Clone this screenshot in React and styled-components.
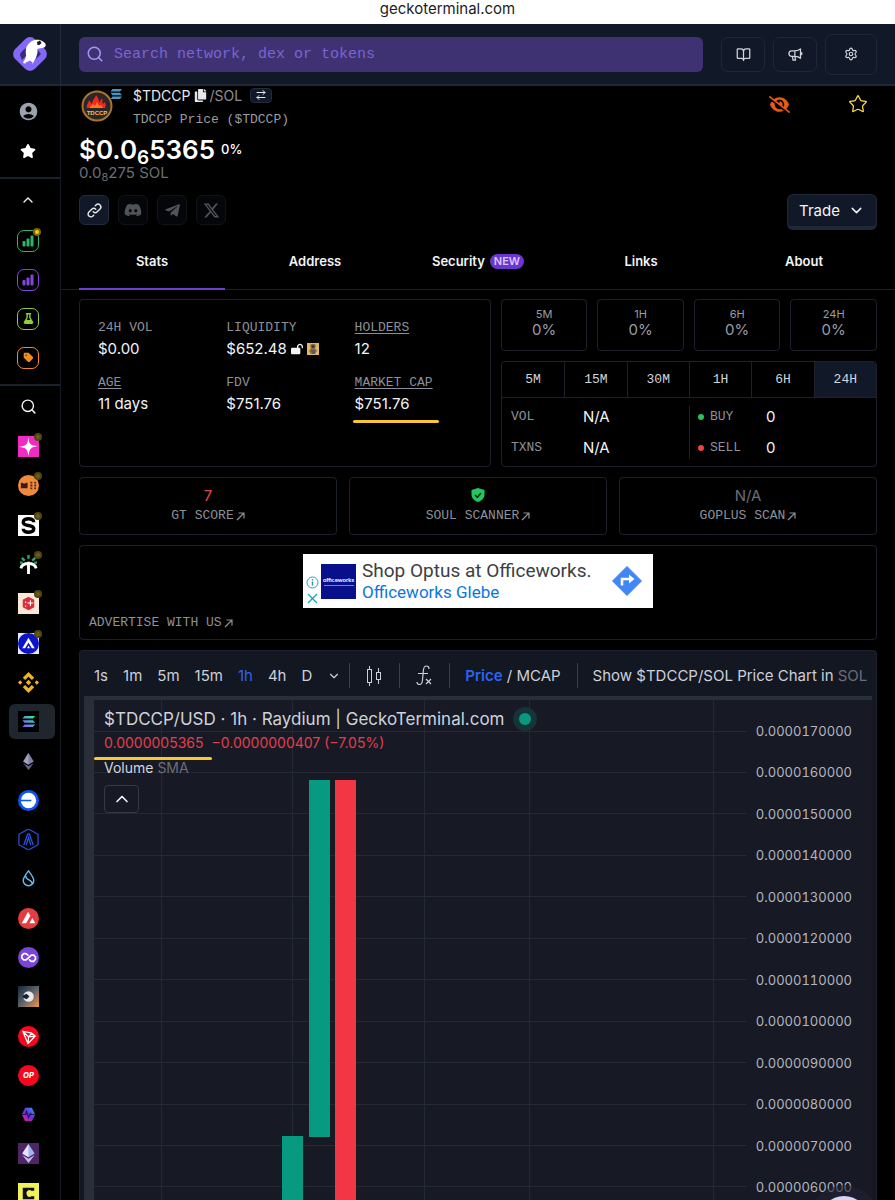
import React from "react";
import styled, { createGlobalStyle } from "styled-components";
import { Search, BookOpen, Settings, Star, ChevronUp, ChevronDown, ArrowRightLeft } from "lucide-react";
import { FaTelegramPlane, FaCopy } from "react-icons/fa";
import { FaDiscord, FaXTwitter, FaEyeSlash, FaLockOpen, FaStar, FaTag, FaFlask } from "react-icons/fa6";
import { MdAccountCircle } from "react-icons/md";
import { HiOutlineLink } from "react-icons/hi";

const sans = `Inter, "Liberation Sans", sans-serif`;
const mono = `"Liberation Mono", monospace`;
const line = "#1c212c";
const highlight = "#f9c82f";

const GlobalStyle = createGlobalStyle`
  *, *::before, *::after { box-sizing: border-box; }
  body { margin: 0; background: #000; color: #f3f4f6; font-family: ${sans}; }
  button, input { font: inherit; color: inherit; }
  button { cursor: pointer; padding: 0; background: none; border: 0; }
  a { color: inherit; text-decoration: none; }
  dl, dt, dd, h1, p, ul { margin: 0; padding: 0; }
  svg { display: block; flex: none; }
`;

/* ---------- shell ---------- */

const Page = styled.div`
  height: 100vh;
  display: flex;
  flex-direction: column;
  overflow: hidden;
`;
const AddressBar = styled.div`
  flex: none;
  height: 24px;
  background: #fff;
  color: #1c1c1e;
  text-align: center;
  font-size: 15px;
  line-height: 18px;
`;
const TopBar = styled.header`
  flex: none;
  display: flex;
  height: 62px;
  background: #111827;
  border-bottom: 2px solid #1f2937;
`;
const Brand = styled.a`
  flex: none;
  width: 61px;
  display: flex;
  align-items: center;
  justify-content: center;
  border-right: 1px solid #222b3a;
`;
const TopContent = styled.div`
  flex: 1;
  display: flex;
  align-items: center;
  gap: 8px;
  padding: 0 18px;
`;
const SearchBox = styled.label`
  flex: 1;
  display: flex;
  align-items: center;
  gap: 8px;
  height: 35px;
  margin-right: 10px;
  padding: 0 7px;
  border-radius: 6px;
  background: #3f3272;
  color: #a994f7;
`;
const SearchInput = styled.input`
  flex: 1;
  min-width: 0;
  border: 0;
  outline: 0;
  background: none;
  font-family: ${mono};
  font-size: 15px;
  &::placeholder { color: #7c63d2; opacity: 1; }
`;
const TopButton = styled.button`
  display: flex;
  align-items: center;
  justify-content: center;
  width: ${(p) => (p.$large ? 52 : 44)}px;
  height: ${(p) => (p.$large ? 41 : 35)}px;
  border: 1px solid #1f2837;
  border-radius: 7px;
  color: #d1d5db;
`;
const Body = styled.div`
  flex: 1;
  min-height: 0;
  display: flex;
`;

/* ---------- sidebar ---------- */

const Sidebar = styled.nav`
  flex: none;
  width: 61px;
  display: flex;
  flex-direction: column;
  border-right: 1px solid #171b26;
`;
const SideGroup = styled.div`
  flex: none;
  padding: ${(p) => p.$pad};
  border-bottom: 2px solid #1c222c;
`;
const SideLink = styled.a`
  display: flex;
  align-items: center;
  justify-content: center;
  height: ${(p) => p.$height}px;
  padding-right: 4px;
`;
const SideToggle = styled.button`
  display: flex;
  align-items: center;
  justify-content: center;
  width: 100%;
  flex: none;
  height: ${(p) => p.$height}px;
  padding-right: 4px;
`;
const Framed = styled.span`
  position: relative;
  display: flex;
  align-items: center;
  justify-content: center;
  width: 22px;
  height: 22px;
  border: 1px solid ${(p) => p.$color};
  border-radius: 7px;
  color: ${(p) => p.$color};
`;
const Ping = styled.span`
  position: absolute;
  top: -3px;
  right: -3px;
  width: 8px;
  height: 8px;
  border-radius: 50%;
  background: ${(p) => (p.$bright ? "#facc15" : "#6b5d14")};
  border: 2px solid ${(p) => (p.$bright ? "#7d6608" : "#3c371199")};
`;
const ChainList = styled.ul`
  flex: 1;
  min-height: 0;
  display: flex;
  flex-direction: column;
  margin-bottom: -13px;
  list-style: none;
`;
const ChainItem = styled.li`
  flex: 1;
  min-height: 0;
  display: flex;
  align-items: center;
  padding: 0 5px 0 9px;
`;
const ChainLink = styled.a`
  flex: 1;
  display: flex;
  align-items: center;
  height: 35px;
  padding-left: 9px;
  border-radius: 6px;
  background: ${(p) => (p.$active ? "#20262e" : "transparent")};
`;
const ChainMark = styled.span`
  position: relative;
  width: 21px;
  height: 21px;
`;

/* ---------- pool heading ---------- */

const Main = styled.main`
  flex: 1;
  min-width: 0;
  display: flex;
  flex-direction: column;
`;
const PoolHead = styled.section`
  flex: none;
  padding: 0 18px;
`;
const Spread = styled.div`
  display: flex;
  justify-content: space-between;
`;
const Identity = styled.div`
  display: flex;
  gap: 12px;
`;
const TokenLogo = styled.div`
  width: 42px;
  padding: 1px 0 0 2px;
`;
const PairName = styled.div`
  display: flex;
  align-items: center;
  height: 18px;
  font-size: 14px;
  color: #e5e7eb;
`;
const Quote = styled.span`
  color: #8b8f99;
  margin-left: 3px;
`;
const SwapButton = styled.button`
  display: flex;
  align-items: center;
  justify-content: center;
  width: 22px;
  height: 15px;
  margin-left: 8px;
  border: 1px solid #222d40;
  border-radius: 4px;
  background: #111827;
`;
const Subtitle = styled.div`
  padding: 6px 0 2px;
  font: 13px/20px ${mono};
  color: #9a9ca3;
`;
const HeadActions = styled.div`
  display: flex;
  align-items: center;
  gap: 58px;
  height: 36px;
  padding-right: 9px;
`;
const Price = styled.h1`
  display: flex;
  align-items: center;
  gap: 6px;
  height: 34px;
  font-size: 26px;
  font-weight: 600;
  color: #fff;
  sub { font-size: 19px; line-height: 1px; vertical-align: -5px; }
`;
const Change = styled.span`
  font-size: 13px;
  font-weight: 500;
`;
const NativePrice = styled.div`
  font-size: 15px;
  line-height: 14px;
  color: #6b6e76;
  sub { font-size: 11px; line-height: 1px; vertical-align: -3px; }
`;
const ActionRow = styled(Spread)`
  align-items: center;
  padding-top: 14px;
`;
const Socials = styled.div`
  display: flex;
  gap: 9px;
  padding-bottom: 4px;
`;
const SocialButton = styled.button`
  display: flex;
  align-items: center;
  justify-content: center;
  width: 30px;
  height: 30px;
  border: 1px solid ${(p) => (p.$active ? "#202c40" : "#111318")};
  border-radius: 6px;
  background: ${(p) => (p.$active ? "#111827" : "#050609")};
  color: ${(p) => (p.$active ? "#e5e7eb" : "#50535a")};
`;
const TradeButton = styled.button`
  display: flex;
  align-items: center;
  justify-content: center;
  gap: 8px;
  width: 90px;
  height: 36px;
  border: 1px solid #1f2937;
  border-bottom-width: 4px;
  border-radius: 6px;
  background: #111827;
  font-size: 15px;
`;
const Tabs = styled.div`
  flex: none;
  display: grid;
  grid-template-columns: repeat(5, 1fr);
  gap: 17px;
  height: 60px;
  padding: 0 18px;
  border-bottom: 1px solid #1b1f2b;
`;
const Tab = styled.button`
  display: flex;
  align-items: center;
  justify-content: center;
  gap: 5px;
  height: 60px;
  border-bottom: 2px solid ${(p) => (p.$active ? "#6d3fd0" : "transparent")};
  padding-top: 4px;
  font-size: 13px;
  font-weight: 600;
`;
const NewBadge = styled.span`
  padding: 0 4px;
  border-radius: 8px;
  background: #6b35cf;
  color: #d9c9fb;
  font-size: 11px;
  line-height: 15px;
`;

/* ---------- statistics ---------- */

const Content = styled.div`
  flex: 1;
  min-height: 0;
  display: flex;
  flex-direction: column;
  gap: 10px;
  padding: 9px 18px 0;
`;
const Card = styled.div`
  border: 1px solid ${line};
  border-radius: 4px;
`;
const StatsRow = styled.div`
  flex: none;
  display: grid;
  grid-template-columns: 23fr 21fr;
  gap: 10px;
`;
const StatGrid = styled(Card).attrs({ as: "dl" })`
  display: grid;
  grid-template-columns: repeat(3, 1fr);
  grid-auto-rows: 42px;
  row-gap: 13px;
  padding: 17px 7px 0 18px;
`;
const StatLabel = styled.dt`
  font: 13px/22px ${mono};
  color: #8d9099;
  text-decoration: ${(p) => (p.$underlined ? "underline" : "none")};
  text-underline-offset: 2px;
`;
const StatValue = styled.dd`
  position: relative;
  display: flex;
  align-items: center;
  gap: 4px;
  font-size: 15px;
  line-height: 20px;
`;
const MarkerLine = styled.span`
  position: absolute;
  left: ${(p) => p.$left}px;
  top: ${(p) => p.$top}px;
  width: ${(p) => p.$width}px;
  height: 3px;
  border-radius: 2px;
  background: ${highlight};
`;
const RightStats = styled.div`
  display: flex;
  flex-direction: column;
  gap: 10px;
`;
const ChangeGrid = styled.div`
  display: grid;
  grid-template-columns: repeat(4, 1fr);
  gap: 10px;
`;
const ChangeCard = styled(Card)`
  height: 52px;
  padding-top: 6px;
  text-align: center;
  color: #9a9da5;
`;
const ChangeLabel = styled.div`
  font-size: 11px;
  line-height: 16px;
`;
const ChangeValue = styled.div`
  font-size: 15px;
  line-height: 16px;
`;
const Activity = styled(Card)`
  overflow: hidden;
`;
const RangeRow = styled.div`
  display: grid;
  grid-template-columns: repeat(6, 1fr);
  height: 36px;
  border-bottom: 1px solid ${line};
`;
const RangeButton = styled.button`
  border-left: 1px solid ${line};
  background: ${(p) => (p.$active ? "#111827" : "transparent")};
  font: 13px ${mono};
  color: #d1d5db;
  &:first-child { border-left: 0; }
`;
const ActivityBody = styled.div`
  display: grid;
  grid-template-columns: 1fr 1fr;
  padding: 8px 0 7px;
`;
const ActivityList = styled.dl`
  display: grid;
  grid-template-columns: ${(p) => p.$labelWidth}px 1fr;
  align-content: space-between;
  height: 53px;
  padding-left: 8px;
  border-left: 1px solid ${(p) => (p.$divided ? line : "transparent")};
  line-height: 22px;
`;
const ActivityLabel = styled.dt`
  display: flex;
  align-items: center;
  gap: 6px;
  font-family: ${mono};
  font-size: 13px;
  color: #8d9099;
`;
const Dot = styled.i`
  width: 6px;
  height: 6px;
  border-radius: 50%;
  background: ${(p) => p.$color};
`;
const ActivityValue = styled.dd`
  font-size: 15px;
`;
const ScoreRow = styled.div`
  flex: none;
  display: grid;
  grid-template-columns: repeat(3, 1fr);
  gap: 12px;
`;
const ScoreCard = styled(Card)`
  display: flex;
  flex-direction: column;
  align-items: center;
  justify-content: center;
  height: 58px;
`;
const ScoreValue = styled.div`
  display: flex;
  align-items: center;
  height: 20px;
  font-size: 15px;
  color: ${(p) => p.$color};
`;
const MonoLink = styled.a`
  display: inline-flex;
  align-items: center;
  gap: 2px;
  font: 13px/22px ${mono};
  color: #8d9099;
`;

/* ---------- advertisement ---------- */

const AdCard = styled(Card)`
  flex: none;
  display: flex;
  flex-direction: column;
  align-items: flex-start;
  gap: 4px;
  padding: 8px 9px 5px;
`;
const AdBanner = styled.a`
  align-self: center;
  display: flex;
  align-items: center;
  width: 350px;
  height: 54px;
  padding: 0 11px 0 3px;
  background: #fff;
`;
const AdMarks = styled.span`
  display: flex;
  flex-direction: column;
  align-self: flex-end;
  gap: 3px;
  padding-bottom: 3px;
`;
const AdLogo = styled.span`
  display: flex;
  flex-direction: column;
  align-items: center;
  justify-content: center;
  width: 35px;
  height: 35px;
  margin-left: 2px;
  background: #07108a;
  color: #fff;
  font: 700 6px/8px Lato, sans-serif;
`;
const AdRule = styled.span`
  width: 30px;
  height: 1px;
  margin-top: 1px;
  background: #7c7fc4;
`;
const AdCopy = styled.span`
  flex: 1;
  padding-left: 6px;
  font-family: Roboto, sans-serif;
`;
const AdTitle = styled.span`
  display: block;
  font-size: 19px;
  line-height: 22px;
  color: #3c4043;
`;
const AdPlace = styled.span`
  display: block;
  font-size: 17px;
  line-height: 20px;
  color: #0b76e0;
`;

/* ---------- chart ---------- */

const ChartCard = styled(Card)`
  flex: 1;
  min-height: 0;
  display: flex;
  flex-direction: column;
  border-bottom: 0;
  border-radius: 4px 4px 0 0;
  padding: 0 4px;
  background: #131722;
`;
const Toolbar = styled.div`
  flex: none;
  display: flex;
  align-items: center;
  height: 45px;
  padding: 4px 0 0 10px;
  font-size: 15px;
  color: #cdd0d9;
  white-space: nowrap;
  overflow: hidden;
`;
const Intervals = styled.div`
  display: flex;
  align-items: center;
  gap: 15px;
  padding-right: 8px;
`;
const ToolButton = styled.button`
  color: ${(p) => (p.$active ? "#2f62f0" : "inherit")};
  font-weight: ${(p) => (p.$strong ? 600 : 400)};
`;
const Separator = styled.span`
  flex: none;
  width: 1px;
  height: 25px;
  margin: 0 15px 0 ${(p) => (p.$flush ? 0 : 16)}px;
  background: #3a3e4a;
`;
const Faded = styled.span`
  color: #6a6e7a;
`;
const ChartFrame = styled.div`
  flex: 1;
  min-height: 0;
  display: flex;
  border-top: 4px solid #2a2e39;
  border-left: 10px solid #2a2e39;
  background: #171a25;
`;
const Plot = styled.div`
  position: relative;
  flex: 1;
  min-width: 0;
`;
const Axis = styled.div`
  flex: none;
  display: flex;
  flex-direction: column;
  margin-bottom: -8px;
  padding: 10px 20px 0 9px;
  font-size: 13px;
  font-variant-numeric: tabular-nums;
  color: #b2b5be;
  span { flex: 1; display: flex; align-items: center; }
`;
const Legend = styled.div`
  position: absolute;
  left: 0;
  top: 0;
  padding: 7px 9px 0 10px;
`;
const LegendTitle = styled.div`
  display: flex;
  align-items: center;
  gap: 8px;
  height: 24px;
  font-size: 17px;
  color: #cfd2da;
`;
const Live = styled.span`
  display: flex;
  align-items: center;
  justify-content: center;
  width: 24px;
  height: 24px;
  border-radius: 50%;
  background: #143437;
`;
const LiveDot = styled.i`
  width: 12px;
  height: 12px;
  border-radius: 50%;
  background: #089981;
`;
const LegendPrice = styled.div`
  position: relative;
  display: flex;
  gap: 8px;
  height: 24px;
  line-height: 24px;
  font-size: 14px;
  color: #e23e4c;
`;
const LegendVolume = styled.div`
  height: 26px;
  line-height: 26px;
  font-size: 14px;
  color: #d3d6de;
`;
const CollapseButton = styled.button`
  display: flex;
  align-items: center;
  justify-content: center;
  width: 35px;
  height: 28px;
  margin-top: 4px;
  border: 1px solid #363a46;
  border-radius: 4px;
`;
const ChatButton = styled.button`
  position: fixed;
  right: 27px;
  bottom: -44px;
  width: 48px;
  height: 48px;
  border-radius: 50%;
  background: #d8d2f4;
  box-shadow: 0 0 0 11px #211f3399;
`;

/* ---------- drawings ---------- */

const GeckoLogo = () => (
  <svg width="36" height="36" viewBox="0 0 36 36">
    <rect x="4" y="4" width="28" height="28" rx="7" fill="#8468f6" transform="rotate(45 18 18)" />
    <path d="M14 12v8l-4 4-2-5c0-2 2-4 6-7zM25 13l4 5-5 5z" fill="#3a2a80" />
    <path d="M11 27c1-3 3-4 3-8-1-7 1-11 6-14 2-1 5-1.500 8-1 2 1 5 2 5.500 4s0 3-1.500 3.500c-2 .7-5 .5-6.500 1.500.5 6-2.500 10-5 15h-5z" fill="#fff" />
    <path d="M25 6l3-1.500L29.500 7l-2 2h-2z" fill="#1b1733" />
    <path d="M13 27l5-2.500 3 2.500-3 4z" fill="#8468f6" />
  </svg>
);
const ExternalArrow = () => (
  <svg width="9" height="9" viewBox="0 0 9 9" fill="none" stroke="currentColor" strokeWidth="1.200">
    <path d="M1 8l7-7M2.500 1H8v5.500" />
  </svg>
);
const SolBars = ({ size = 12 }) => (
  <svg width={size} height={size} viewBox="0 0 12 12">
    <defs>
      <linearGradient id="sol" x1="0" y1="1" x2="1" y2="0">
        <stop stopColor="#9a45ff" />
        <stop offset="1" stopColor="#19fb9b" />
      </linearGradient>
    </defs>
    <path d="M2.500 1H12L10 3.400H.5zM.5 4.800H10l2 2.400H2.500zM2.500 8.600H12L10 11H.5z" fill="url(#sol)" />
  </svg>
);
const TokenDrawing = () => (
  <svg width="41" height="36" viewBox="0 0 41 36">
    <circle cx="16" cy="19" r="14.500" fill="#2c2628" stroke="#a97332" strokeWidth="2" />
    <path d="M6 21c-1-4 2-5 2-8l3 4c0-4 3-5 4-9 2 3 3 4 3 8l3-5c1 3 0 4 1 6l2-2c1 3 1 4 0 6z" fill="#f0291f" />
    <path d="M9 21c0-3 2-2 3-4l2 2 2-4 2 4 2-1 2 3z" fill="#fb7a1e" />
    <text x="16" y="28" textAnchor="middle" fontFamily="Liberation Sans, sans-serif" fontWeight="700" fontSize="6" fill="#f3c14b">TDCCP</text>
    <path transform="translate(29 1)" d="M2.500 1H12L10 3.400H.5zM.5 4.800H10l2 2.400H2.500zM2.500 8.600H12L10 11H.5z" fill="#4d94c4" />
  </svg>
);
const Bars = () => (
  <svg width="12" height="12" viewBox="0 0 12 12" fill="currentColor">
    <rect x="0.500" y="6" width="3" height="5.500" rx="1" />
    <rect x="4.500" y="3.500" width="3" height="8" rx="1" />
    <rect x="8.500" y="0.500" width="3" height="11" rx="1" />
  </svg>
);
const Horn = () => (
  <svg width="15" height="15" viewBox="0 0 24 24" fill="none" stroke="currentColor" strokeWidth="2" strokeLinejoin="round" strokeLinecap="round">
    <path d="M11 6H6a4.500 4.500 0 0 0 0 9h5zM11 6c4 0 7-1 9-3v15c-2-2-5-3-9-3M7 15l1 6h4l-1-6M22 9v3" />
  </svg>
);
const ShieldCheck = () => (
  <svg width="14" height="14" viewBox="0 0 14 14">
    <path d="M7 0l6.500 2v4.500C13.500 10 11 12.800 7 14 3 12.800.5 10 .5 6.500V2z" fill="#22c55e" />
    <path d="M4 7l2.300 2.300L10 5" fill="none" stroke="#052e12" strokeWidth="1.500" />
  </svg>
);
const Fish = () => (
  <svg width="12" height="12" viewBox="0 0 12 12">
    <rect width="12" height="12" fill="#dfb95e" />
    <path d="M4 1h4l1 2-1 2 2 3-2 3H4L2 8l2-3-1-2z" fill="#8c6a4c" />
    <circle cx="6" cy="3.500" r="1.500" fill="#40342f" />
    <path d="M4 8h4M5 10h3" stroke="#4b5679" strokeWidth="1.500" />
  </svg>
);
const Candles = () => (
  <svg width="18" height="22" viewBox="0 0 18 22" fill="none" stroke="currentColor">
    <path d="M4.500 1v3M4.500 18v3M13.500 3v4M13.500 15v4" />
    <rect x="2.500" y="4.500" width="4" height="13" />
    <rect x="11.500" y="7.500" width="4" height="7" />
  </svg>
);
const Fx = () => (
  <svg width="18" height="22" viewBox="0 0 18 22" fill="none" stroke="currentColor" strokeWidth="1.200">
    <path d="M14 4c0-2-1-3-2.500-3C9 1 8.500 3 8.300 6L7.500 15c-.2 3-1 4.500-3 4.500C3 19.500 2 18.500 2 17M3 8.500h10M11 14l5 5M16 14l-5 5" />
  </svg>
);
const AdInfo = () => (
  <svg width="13" height="13" viewBox="0 0 13 13" fill="none" stroke="#18a4bb">
    <circle cx="6.500" cy="6.500" r="5.500" />
    <path d="M6.500 5.500v4M6.500 3v1.500" strokeWidth="1.500" />
  </svg>
);
const AdClose = () => (
  <svg width="13" height="13" viewBox="0 0 13 13" fill="none" stroke="#18a4bb" strokeWidth="1.300">
    <path d="M2 2l9 9M11 2l-9 9" />
  </svg>
);
const Directions = () => (
  <svg width="30" height="30" viewBox="0 0 30 30">
    <path d="M15 .5L29.500 15 15 29.500.5 15z" fill="#4285f4" stroke="#4285f4" strokeLinejoin="round" />
    <path d="M10 19.500V13h8" fill="none" stroke="#fff" strokeWidth="2.500" />
    <path d="M17 8.500l5.500 4.500-5.500 4.500z" fill="#fff" />
  </svg>
);

const chains = [
  { name: "Fluent", ping: true, art: <><rect width="22" height="22" fill="#f02bc4" /><path d="M11 1c.5 7 1 9 10 9.500C13 12 12 13 11 21 10 14 9 12 1 11.500 9 10 10 9 11 1z" fill="#fff" /></> },
  { name: "Bear Chain", ping: true, art: <><circle cx="11" cy="11" r="11" fill="#f08a3c" /><path d="M3 8h1.500l1 1h2l1-1H10v6H3z" fill="#3a1c16" /><path d="M14 7v8M18 7v8" stroke="#5b271a" strokeWidth="2" strokeDasharray="2 1" /></> },
  { name: "Sonic", ping: true, art: <><rect width="22" height="22" fill="#fff" /><path d="M16.500 7.500c0-2.500-2.500-3.500-5.500-3.500S5.500 5 5.500 7.500 8 10.500 11 11s5.500 1 5.500 3.500S14 18 11 18s-5.500-1-5.500-3.500" fill="none" stroke="#000" strokeWidth="3.600" /></> },
  { name: "Palm", ping: true, art: <><path d="M11 1v4M4 4l3 3M18 4l-3 3M2 9h3M17 9h3" stroke="#2fa568" strokeWidth="2.500" /><path d="M11 8v13M11 10c-4 0-7 1-8 5M11 10c4 0 7 1 8 5" fill="none" stroke="#fff" strokeWidth="3" /></> },
  { name: "Core", ping: true, art: <><rect width="22" height="22" fill="#f7e8d8" /><path d="M11 4l6 3v8l-6 3-6-3V7z" fill="#d92f3c" /><path d="M13 7.500v6M10 10.500h6M8 9v1.500M8 13v1.500" stroke="#fff" strokeWidth="1.200" /></> },
  { name: "Aura", ping: true, art: <><rect width="22" height="22" fill="#e9e9fb" /><circle cx="11" cy="11" r="11" fill="#0d14c8" /><path d="M4.500 16L11 5l6.500 11h-3L11 10l-3.500 6zM9.500 16l1.500-3 1.500 3z" fill="#fff" /></> },
  { name: "BNB Chain", art: <path d="M11 0l6 6-2.500 2.500L11 5 7.500 8.500 5 6zM0 11l2.300-2.300L4.600 11l-2.300 2.300zM17.400 11l2.300-2.300L22 11l-2.300 2.300zM11 8.200l2.800 2.800L11 13.800 8.200 11zM5 16l2.500-2.500L11 17l3.500-3.500L17 16l-6 6z" fill="#eab52c" /> },
  { name: "Solana", active: true, art: <><rect width="22" height="22" fill="#000" /><g transform="translate(4 4)"><SolBars size={14} /></g></> },
  { name: "Ethereum", art: <><path d="M11 2l5.500 9L11 14.500 5.500 11z" fill="#7f7fa8" /><path d="M11 2v12.500L5.500 11z" fill="#a1a0c0" /><path d="M5.500 12.500L11 16l5.500-3.500L11 20z" fill="#676690" /></> },
  { name: "Base", art: <><circle cx="11" cy="11" r="11" fill="#0c56f0" /><circle cx="11" cy="11" r="8" fill="#fff" /><path d="M2 11h12" stroke="#0c56f0" strokeWidth="1.600" /></> },
  { name: "Arbitrum", art: <g fill="none" stroke="#2b51d8" strokeWidth="1.300"><path d="M11 0l10 5.500v11L11 22 1 16.500v-11z" /><path d="M6 17l4-11.500h2L16 17M8.500 17L11 9l2.500 8" strokeWidth="1.400" /></g> },
  { name: "Sui", art: <path d="M11 3c3 4 5.500 7 5.500 10a5.500 5.500 0 0 1-11 0c0-3 2.500-6 5.500-10zM8 8c0 5 7 4 7 9" fill="none" stroke="#65b7ee" strokeWidth="1.500" /> },
  { name: "Avalanche", art: <><circle cx="11" cy="11" r="11" fill="#e23d3f" /><path d="M4 16l6.500-12 2.500 4-4.500 8zM12 16l3-5.500 3.200 5.500z" fill="#fff" /></> },
  { name: "Polygon", art: <><circle cx="11" cy="11" r="11" fill="#7b45da" /><path d="M11 9L8.500 7 6 7 4 9v2.500l2 2h2.500L14 8.500h2.500l1.800 2v2.500l-2 2h-2.500L11.500 13" fill="none" stroke="#fff" strokeWidth="1.700" strokeLinejoin="round" /></> },
  { name: "Eclipse", art: <><defs><linearGradient id="eclipse" x2="1" y2="1"><stop stopColor="#132737" /><stop offset=".5" stopColor="#5c626a" /><stop offset="1" stopColor="#f39447" /></linearGradient></defs><rect width="22" height="22" fill="url(#eclipse)" /><circle cx="11" cy="11" r="5.500" fill="#e6e8ec" /><path d="M5 10l4-2 3 3-3 3-4-2" fill="#1a2230" /></> },
  { name: "Tron", art: <><circle cx="11" cy="11" r="11" fill="#f4091f" /><path d="M5 5.500l9.500 2L18 10.500 10.500 18.500zM5 5.500l6 6 7-1M11 11.500l-.5 7M14.500 7.500l-3.500 4" fill="none" stroke="#fff" strokeWidth="1.300" strokeLinejoin="round" /></> },
  { name: "Optimism", art: <><circle cx="11" cy="11" r="11" fill="#f8061e" /><text x="11" y="14" textAnchor="middle" fontFamily="Inter, sans-serif" fontSize="8" fontWeight="800" fontStyle="italic" fill="#fff">OP</text></> },
  { name: "PulseChain", art: <><defs><linearGradient id="pulse" x1="1" y1="0" x2="0" y2="1"><stop stopColor="#17b4f5" /><stop offset=".5" stopColor="#6d2de0" /><stop offset="1" stopColor="#f81f6f" /></linearGradient></defs><path d="M7.500 4h7l3.500 7-3.500 7h-7L4 11z" fill="url(#pulse)" /><path d="M4 11h4l1-3 2 6 2-4 1 1h4" fill="none" stroke="#25135a" strokeWidth="1.300" /></> },
  { name: "EthereumPoW", art: <><rect width="22" height="22" fill="#4f2565" /><path d="M11 1l6.500 10L11 15 4.500 11z" fill="#9cb5ef" /><path d="M11 1v14l-6.500-4z" fill="#e8e3fb" /><path d="M4.500 12.500L11 16.500l6.500-4L11 21z" fill="#c6b9ef" /></> },
  { name: "Celo", art: <><rect width="22" height="22" fill="#f3f15a" /><path d="M17 8V5H5v12h12v-3h-3a3.500 3.500 0 1 1 0-6z" fill="#111" /></> },
];

const intervals = ["1s", "1m", "5m", "15m", "1h", "4h", "D"];
const axisPrices = ["170000", "160000", "150000", "140000", "130000", "120000", "110000", "100000", "090000", "080000", "070000", "060000"];

const Stat = ({ label, underlined, children }) => (
  <div>
    <StatLabel $underlined={underlined}>{label}</StatLabel>
    <StatValue>{children}</StatValue>
  </div>
);
const Score = ({ label, color, children }) => (
  <ScoreCard>
    <ScoreValue $color={color}>{children}</ScoreValue>
    <MonoLink href="#">{label}<ExternalArrow /></MonoLink>
  </ScoreCard>
);

function SideNav() {
  return (
    <Sidebar aria-label="Networks">
      <SideGroup $pad="5px 0 6px">
        <SideLink $height={40} href="#" aria-label="Account"><MdAccountCircle size={21} color="#9ca3af" /></SideLink>
        <SideLink $height={40} href="#" aria-label="Watchlist"><FaStar size={16} color="#fff" /></SideLink>
      </SideGroup>
      <SideGroup $pad="0 0 7px">
        <SideToggle $height={42} aria-label="Collapse"><ChevronUp size={16} /></SideToggle>
        <SideLink $height={39} href="#" aria-label="Trending"><Framed $color="#2fb563"><Bars /><Ping $bright /></Framed></SideLink>
        <SideLink $height={39} href="#" aria-label="Top pools"><Framed $color="#8048d8"><Bars /></Framed></SideLink>
        <SideLink $height={39} href="#" aria-label="New pools"><Framed $color="#8fcf3c"><FaFlask size={11} /></Framed></SideLink>
        <SideLink $height={39} href="#" aria-label="Categories"><Framed $color="#f58a1f"><FaTag size={11} /></Framed></SideLink>
      </SideGroup>
      <SideToggle $height={41} aria-label="Find network"><Search size={17} /></SideToggle>
      <ChainList>
        {chains.map((c) => (
          <ChainItem key={c.name}>
            <ChainLink href="#" $active={c.active} aria-label={c.name}>
              <ChainMark>
                <svg width="21" height="21" viewBox="0 0 22 22">{c.art}</svg>
                {c.ping && <Ping />}
              </ChainMark>
            </ChainLink>
          </ChainItem>
        ))}
      </ChainList>
    </Sidebar>
  );
}

function Heading() {
  return (
    <PoolHead>
      <Spread>
        <Identity>
          <TokenLogo><TokenDrawing /></TokenLogo>
          <div>
            <PairName>
              $TDCCP<Quote as="span" aria-hidden="true" /><FaCopy size={13} /><Quote>/SOL</Quote>
              <SwapButton aria-label="Swap pair"><ArrowRightLeft size={12} /></SwapButton>
            </PairName>
            <Subtitle>TDCCP Price ($TDCCP)</Subtitle>
          </div>
        </Identity>
        <HeadActions>
          <button aria-label="Hide"><FaEyeSlash size={21} color="#ea5a15" /></button>
          <button aria-label="Favourite"><Star size={20} strokeWidth={1.500} color="#fde047" /></button>
        </HeadActions>
      </Spread>
      <Price><span>$0.0<sub>6</sub>5365</span><Change>0%</Change></Price>
      <NativePrice>0.0<sub>8</sub>275 SOL</NativePrice>
      <ActionRow>
        <Socials>
          <SocialButton $active aria-label="Website"><HiOutlineLink size={17} /></SocialButton>
          <SocialButton aria-label="Discord"><FaDiscord size={18} /></SocialButton>
          <SocialButton aria-label="Telegram"><FaTelegramPlane size={17} /></SocialButton>
          <SocialButton aria-label="X"><FaXTwitter size={17} /></SocialButton>
        </Socials>
        <TradeButton>Trade<ChevronDown size={17} /></TradeButton>
      </ActionRow>
    </PoolHead>
  );
}

function Statistics() {
  return (
    <StatsRow>
      <StatGrid>
        <Stat label="24H VOL">$0.00</Stat>
        <Stat label="LIQUIDITY">$652.48<FaLockOpen size={12} /><Fish /></Stat>
        <Stat label="HOLDERS" underlined>12</Stat>
        <Stat label="AGE" underlined>11 days</Stat>
        <Stat label="FDV">$751.76</Stat>
        <Stat label="MARKET CAP" underlined>$751.76<MarkerLine $left={-2} $top={26} $width={86} /></Stat>
      </StatGrid>
      <RightStats>
        <ChangeGrid>
          {["5M", "1H", "6H", "24H"].map((t) => (
            <ChangeCard key={t}><ChangeLabel>{t}</ChangeLabel><ChangeValue>0%</ChangeValue></ChangeCard>
          ))}
        </ChangeGrid>
        <Activity>
          <RangeRow>
            {["5M", "15M", "30M", "1H", "6H", "24H"].map((t) => (
              <RangeButton key={t} $active={t === "24H"}>{t}</RangeButton>
            ))}
          </RangeRow>
          <ActivityBody>
            <ActivityList $labelWidth={72}>
              <ActivityLabel>VOL</ActivityLabel><ActivityValue>N/A</ActivityValue>
              <ActivityLabel>TXNS</ActivityLabel><ActivityValue>N/A</ActivityValue>
            </ActivityList>
            <ActivityList $labelWidth={68} $divided>
              <ActivityLabel><Dot $color="#22c55e" />BUY</ActivityLabel><ActivityValue>0</ActivityValue>
              <ActivityLabel><Dot $color="#ef4444" />SELL</ActivityLabel><ActivityValue>0</ActivityValue>
            </ActivityList>
          </ActivityBody>
        </Activity>
      </RightStats>
    </StatsRow>
  );
}

function Chart() {
  return (
    <ChartCard>
      <Toolbar>
        <Intervals>
          {intervals.map((t) => <ToolButton key={t} $active={t === "1h"}>{t}</ToolButton>)}
          <ToolButton aria-label="More intervals"><ChevronDown size={14} /></ToolButton>
        </Intervals>
        <Separator $flush />
        <ToolButton aria-label="Candles"><Candles /></ToolButton>
        <Separator />
        <ToolButton aria-label="Indicators"><Fx /></ToolButton>
        <Separator />
        <ToolButton $active $strong>Price</ToolButton>&nbsp;/&nbsp;<ToolButton>MCAP</ToolButton>
        <Separator />
        <ToolButton>Show $TDCCP/SOL Price Chart in <Faded>SOL</Faded></ToolButton>
      </Toolbar>
      <ChartFrame>
        <Plot>
          <svg width="100%" height="100%">
            <g stroke="#252934">
              {[67, 198, 330, 435, 619].map((x) => <line key={x} x1={x + 0.5} x2={x + 0.5} y1="0" y2="100%" />)}
              {axisPrices.map((p, i) => {
                const y = Math.round(30.5 + i * 41.45) + 0.5;
                return <line key={p} x1="0" x2="100%" y1={y} y2={y} />;
              })}
            </g>
            <rect x="188" y="436" width="21" height="100%" fill="#089981" />
            <rect x="215" y="80" width="21" height="357" fill="#089981" />
            <rect x="241" y="80" width="21" height="100%" fill="#f23645" />
          </svg>
          <Legend>
            <LegendTitle>$TDCCP/USD · 1h · Raydium | GeckoTerminal.com<Live><LiveDot /></Live></LegendTitle>
            <LegendPrice>
              <span>0.0000005365</span><span>−0.0000000407 (−7.05%)</span>
              <MarkerLine $left={-10} $top={26} $width={118} />
            </LegendPrice>
            <LegendVolume>Volume <Faded>SMA</Faded></LegendVolume>
            <CollapseButton aria-label="Collapse legend"><ChevronUp size={20} /></CollapseButton>
          </Legend>
        </Plot>
        <Axis>{axisPrices.map((p) => <span key={p}>0.0000{p}</span>)}</Axis>
      </ChartFrame>
    </ChartCard>
  );
}

export default function App() {
  return (
    <Page>
      <GlobalStyle />
      <AddressBar>geckoterminal.com</AddressBar>
      <TopBar>
        <Brand href="#" aria-label="GeckoTerminal"><GeckoLogo /></Brand>
        <TopContent>
          <SearchBox>
            <Search size={18} />
            <SearchInput aria-label="Search" placeholder="Search network, dex or tokens" />
          </SearchBox>
          <TopButton aria-label="Guide"><BookOpen size={15} /></TopButton>
          <TopButton aria-label="Announcements"><Horn /></TopButton>
          <TopButton $large aria-label="Settings"><Settings size={14} /></TopButton>
        </TopContent>
      </TopBar>
      <Body>
        <SideNav />
        <Main>
          <Heading />
          <Tabs>
            <Tab $active>Stats</Tab>
            <Tab>Address</Tab>
            <Tab>Security<NewBadge>NEW</NewBadge></Tab>
            <Tab>Links</Tab>
            <Tab>About</Tab>
          </Tabs>
          <Content>
            <Statistics />
            <ScoreRow>
              <Score label="GT SCORE" color="#e5484d">7</Score>
              <Score label="SOUL SCANNER" color="#22c55e"><ShieldCheck /></Score>
              <Score label="GOPLUS SCAN" color="#6b6e76">N/A</Score>
            </ScoreRow>
            <AdCard>
              <AdBanner href="#">
                <AdMarks><AdInfo /><AdClose /></AdMarks>
                <AdLogo>officeworks<AdRule /></AdLogo>
                <AdCopy>
                  <AdTitle>Shop Optus at Officeworks.</AdTitle>
                  <AdPlace>Officeworks Glebe</AdPlace>
                </AdCopy>
                <Directions />
              </AdBanner>
              <MonoLink href="#">ADVERTISE WITH US<ExternalArrow /></MonoLink>
            </AdCard>
            <Chart />
          </Content>
        </Main>
      </Body>
      <ChatButton aria-label="Chat" />
    </Page>
  );
}
